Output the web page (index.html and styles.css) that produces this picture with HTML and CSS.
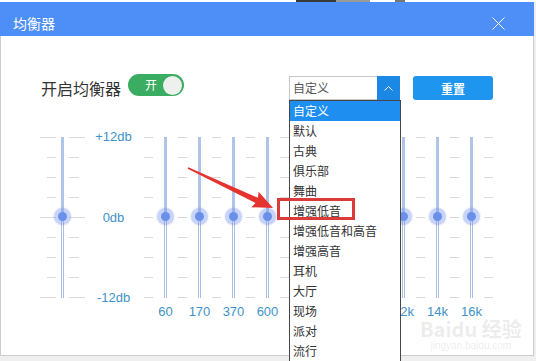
FILE: index.html
```html
<!DOCTYPE html>
<html lang="zh-CN">
<head>
    <meta charset="UTF-8">
    <meta name="viewport" content="width=device-width, initial-scale=1.0">
    <title>均衡器</title>
    <link rel="stylesheet" href="styles.css">
</head>
<body>
    <div class="topline"></div>
    <div class="window">
        <div class="titlebar">
            <span class="title">均衡器</span>
            <svg class="close" width="13" height="13" viewBox="0 0 13 13"><path d="M0.5 0.5L12.5 12.5M12.5 0.5L0.5 12.5" stroke="#fff" stroke-width="1" fill="none"/></svg>
        </div>

        <div class="top">
            <span class="label">开启均衡器</span>
            <div class="switch"><span>开</span><i class="dot"></i></div>
            <div class="select">
                <span class="value">自定义</span>
                <span class="arrow"><svg width="9" height="5" viewBox="0 0 9 5"><polyline points="0.5,4.5 4.5,0.5 8.5,4.5" stroke="#fff" stroke-width="1" fill="none"/></svg></span>
                <ul class="options">
                    <li class="on">自定义</li>
                    <li>默认</li>
                    <li>古典</li>
                    <li>俱乐部</li>
                    <li>舞曲</li>
                    <li>增强低音</li>
                    <li>增强低音和高音</li>
                    <li>增强高音</li>
                    <li>耳机</li>
                    <li>大厅</li>
                    <li>现场</li>
                    <li>派对</li>
                    <li>流行</li>
                </ul>
            </div>
            <button class="reset">重置</button>
        </div>

        <div class="eq">
            <div class="ticks major left"></div>
            <div class="band pre"><div class="track"><i class="knob"></i></div></div>
            <div class="ticks major right"></div>
            <div class="scale"><span>+12db</span><span>0db</span><span>-12db</span></div>

            <div class="ticks"></div>
            <div class="band"><div class="track"><i class="knob"></i></div><span class="freq">60</span></div>
            <div class="ticks"></div>
            <div class="band"><div class="track"><i class="knob"></i></div><span class="freq">170</span></div>
            <div class="ticks"></div>
            <div class="band"><div class="track"><i class="knob"></i></div><span class="freq">370</span></div>
            <div class="ticks"></div>
            <div class="band"><div class="track"><i class="knob"></i></div><span class="freq">600</span></div>
            <div class="ticks"></div>
            <div class="band"><div class="track"><i class="knob"></i></div><span class="freq">1k</span></div>
            <div class="ticks"></div>
            <div class="band"><div class="track"><i class="knob"></i></div><span class="freq">3k</span></div>
            <div class="ticks"></div>
            <div class="band"><div class="track"><i class="knob"></i></div><span class="freq">6k</span></div>
            <div class="ticks"></div>
            <div class="band"><div class="track"><i class="knob"></i></div><span class="freq">12k</span></div>
            <div class="ticks"></div>
            <div class="band"><div class="track"><i class="knob"></i></div><span class="freq">14k</span></div>
            <div class="ticks"></div>
            <div class="band"><div class="track"><i class="knob"></i></div><span class="freq">16k</span></div>
            <div class="ticks"></div>
        </div>
    </div>

    <!-- annotation drawn over the screenshot -->
    <div class="mark"></div>
    <svg class="pointer" width="536" height="361" viewBox="0 0 536 361">
        <polygon transform="translate(188 168) rotate(25.2)" points="0,-0.8 76,-2.8 74,-8.5 94,0 74,8.5 76,2.8 0,0.8" fill="#e53430"/>
    </svg>

    <div class="watermark">
        <span class="wm-big">Baidu 经验</span>
        <span class="wm-small">jingyan.baidu.com</span>
    </div>
</body>
</html>
```

FILE: styles.css
```css
body {
    margin: 0;
    width: 536px;
    height: 361px;
    overflow: hidden;
    position: relative;
    background: #efefef;
    font-family: "Noto Sans CJK SC", "Liberation Sans", sans-serif;
    color: #333;
}
.topline {
    height: 2px;
    background: linear-gradient(to right, #fff 0 296px, #3a3a3a 296px 336px, #9a9a9a 336px 370px, #fff 370px 395px, #777 395px 405px, #fff 405px);
}
.window {
    width: 534px;
    height: 354px;
    box-sizing: border-box;
    background: #fff;
    border: 1px solid #cdcdcd;
    border-top: 0;
}
.titlebar {
    display: flex;
    justify-content: space-between;
    align-items: center;
    height: 34px;
    box-sizing: border-box;
    margin: 0 -1px;
    padding: 8px 29px 0 13px;
    background: #4d8ff6;
}
.title {
    color: #fff;
    font-size: 14px;
    line-height: 20px;
}
.close {
    display: block;
}

/* top row */
.top {
    display: flex;
    align-items: center;
    height: 24px;
    margin-top: 40px;
    padding: 0 40px;
}
.label {
    font-size: 16px;
    line-height: 24px;
    color: #333;
}
.switch {
    display: flex;
    align-items: center;
    align-self: flex-start;
    margin: -2px 0 0 7px;
    width: 56px;
    height: 22px;
    box-sizing: border-box;
    padding: 0 2px 0 17px;
    border-radius: 11px;
    background: #3bad62;
}
.switch span {
    color: #fff;
    font-size: 12px;
    line-height: 22px;
}
.dot {
    margin-left: auto;
    width: 19px;
    height: 19px;
    border-radius: 50%;
    background: #eef0ee;
}
.select {
    position: relative;
    display: flex;
    align-items: center;
    margin-left: auto;
    width: 111px;
    height: 24px;
    box-sizing: border-box;
    border: 1px solid #c6c6c6;
}
.value {
    flex: 1;
    padding-left: 3px;
    font-size: 12px;
    line-height: 22px;
    color: #555;
}
.arrow {
    display: flex;
    align-items: center;
    justify-content: center;
    width: 23px;
    height: 24px;
    margin: -1px -1px -1px 0;
    background: #1b88e6;
}
.options {
    position: absolute;
    top: calc(100% + 1px);
    left: -1px;
    width: 112px;
    box-sizing: border-box;
    margin: 0;
    padding: 0;
    list-style: none;
    border: 1px solid #474747;
    background: #fff;
    z-index: 2;
}
.options li {
    height: 20px;
    padding-left: 3px;
    font-size: 12px;
    line-height: 20px;
    color: #333;
}
.options li.on {
    background: #1e8ff0;
    color: #fff;
}
.reset {
    margin-left: 13px;
    width: 80px;
    height: 24px;
    border: none;
    border-radius: 3px;
    background: #1e96ef;
    color: #fff;
    font-family: inherit;
    font-size: 12px;
    font-weight: bold;
    padding: 0;
}

/* sliders */
.eq {
    display: flex;
    align-items: flex-start;
    margin-top: 37px;
    padding-left: 39px;
}
.ticks {
    width: 9px;
    height: 161px;
    background: repeating-linear-gradient(#dadada 0 1px, transparent 1px 20px);
}
.ticks.major {
    width: 16px;
    background:
        repeating-linear-gradient(#dadada 0 1px, transparent 1px 80px),
        repeating-linear-gradient(#dadada 0 1px, transparent 1px 20px) right top / 9px 100% no-repeat;
}
.ticks.major.right {
    background:
        repeating-linear-gradient(#dadada 0 1px, transparent 1px 80px),
        repeating-linear-gradient(#dadada 0 1px, transparent 1px 20px) left top / 10px 100% no-repeat;
}
.band {
    display: flex;
    flex-direction: column;
    align-items: center;
    width: 25px;
}
.band.pre {
    width: 13px;
}
.track {
    position: relative;
    width: 3px;
    height: 161px;
    background: linear-gradient(to right, #aabee2 0 1px, transparent 1px 2px, #aabee2 2px 3px);
}
.track::before {
    content: "";
    position: absolute;
    top: 0;
    left: 0;
    width: 3px;
    height: 80px;
    background: #b0c4ea;
}
.knob {
    position: absolute;
    top: 75px;
    left: -3px;
    width: 9px;
    height: 9px;
    border-radius: 50%;
    background: #6b90ea;
    box-shadow: 0 0 0 4px rgba(120, 152, 235, 0.32), 0 0 1px 5px rgba(120, 152, 235, 0.14);
}
.freq {
    margin-top: 6px;
    font-family: "Liberation Sans", sans-serif;
    font-size: 13px;
    line-height: 16px;
    color: #4192c8;
    white-space: nowrap;
}
.scale {
    display: flex;
    flex-direction: column;
    justify-content: space-between;
    align-items: center;
    width: 57px;
    padding-right: 2px;
    height: 175px;
    margin-top: -7px;
    font-family: "Liberation Sans", sans-serif;
    font-size: 13px;
    line-height: 14px;
    color: #4192c8;
}

/* annotation */
.mark {
    position: absolute;
    left: 277px;
    top: 198px;
    width: 78px;
    height: 22px;
    box-sizing: border-box;
    border: 3px solid #dc3b3b;
    z-index: 3;
}
.pointer {
    position: absolute;
    left: 0;
    top: 0;
    z-index: 3;
}
.watermark {
    position: absolute;
    left: 420px;
    top: 318px;
    display: flex;
    flex-direction: column;
    align-items: center;
    white-space: nowrap;
    color: rgba(190, 190, 190, 0.28);
    z-index: 1;
}
.wm-big {
    font-size: 20px;
    line-height: 22px;
    font-weight: bold;
}
.wm-small {
    font-family: "Liberation Sans", sans-serif;
    font-size: 10px;
    line-height: 12px;
}
```
